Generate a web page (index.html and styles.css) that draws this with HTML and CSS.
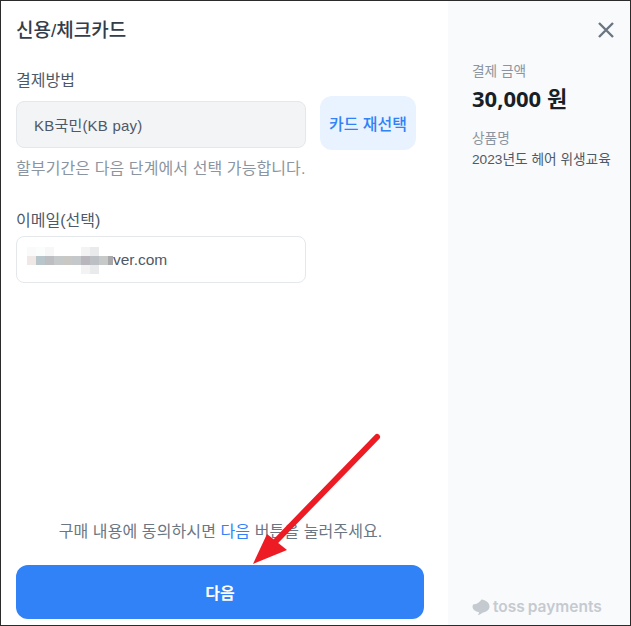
FILE: index.html
```html
<!DOCTYPE html>
<html lang="ko">
<head>
    <meta charset="UTF-8">
    <title>신용/체크카드</title>
    <link rel="stylesheet" href="styles.css">
</head>
<body>
    <div class="window">
        <div class="main">
            <h1 class="title">신용/체크카드</h1>

            <div class="field-label method-label">결제방법</div>
            <div class="method-row">
                <div class="input input-disabled">KB국민(KB pay)</div>
                <button class="reselect">카드 재선택</button>
            </div>
            <p class="hint">할부기간은 다음 단계에서 선택 가능합니다.</p>

            <div class="field-label email-label">이메일(선택)</div>
            <div class="input email-input">
                <svg class="mosaic" width="90" height="27" viewBox="0 0 90 27">
                    <rect x="0" y="0" width="9" height="9" fill="#fafafa"/>
                    <rect x="9" y="0" width="9" height="9" fill="#fbfcfc"/>
                    <rect x="18" y="0" width="9" height="9" fill="#f7f7f7"/>
                    <rect x="54" y="0" width="9" height="9" fill="#f3f3f3"/>
                    <rect x="63" y="0" width="9" height="9" fill="#e9eaec"/>
                    <rect x="0" y="9" width="9" height="9" fill="#efe8e6"/>
                    <rect x="9" y="9" width="9" height="9" fill="#b8c6cc"/>
                    <rect x="18" y="9" width="9" height="9" fill="#bcbec1"/>
                    <rect x="27" y="9" width="9" height="9" fill="#c6c9c9"/>
                    <rect x="36" y="9" width="9" height="9" fill="#c9c8c5"/>
                    <rect x="45" y="9" width="9" height="9" fill="#c4c8cb"/>
                    <rect x="54" y="9" width="9" height="9" fill="#b9b7bd"/>
                    <rect x="63" y="9" width="9" height="9" fill="#bcc0c5"/>
                    <rect x="72" y="9" width="9" height="9" fill="#c6c9c8"/>
                    <rect x="81" y="9" width="5" height="9" fill="#a9a9ab"/>
                    <rect x="54" y="18" width="9" height="9" fill="#f3f3f3"/>
                    <rect x="63" y="18" width="9" height="9" fill="#e9eaec"/>
                </svg>
                <span class="email-text">ver.com</span>
            </div>

            <div class="bottom">
                <p class="agree">구매 내용에 동의하시면 <span class="agree-link">다음</span> 버튼을 눌러주세요.</p>
                <button class="next">다음</button>
            </div>
        </div>

        <div class="side">
            <button class="close" aria-label="닫기">
                <svg width="18" height="18" viewBox="0 0 18 18">
                    <path d="M2 2L16 16M16 2L2 16" stroke="#6b7684" stroke-width="2.4" fill="none"/>
                </svg>
            </button>
            <div class="side-label">결제 금액</div>
            <div class="amount">30,000 원</div>
            <div class="side-label product-label">상품명</div>
            <div class="product">2023년도 헤어 위생교육</div>

            <div class="logo">
                <svg width="18" height="17" viewBox="0 0 18 17">
                    <path d="M9.5 0.5C13.8 1 17.5 3.6 17.5 7.6C17.5 11 14.6 13.2 11 13.4C9.6 14.6 8 15.6 5.8 16.2C6.6 15.2 7 14.2 7 13.2C3.2 12.6 0.5 10.6 0.5 7.6C0.5 6.6 0.9 5.8 1.6 5.2C4.4 5.4 7.2 4 9.5 0.5Z" fill="#c5cad1"/>
                </svg>
                <span>toss payments</span>
            </div>
        </div>

        <svg class="arrow" width="631" height="626" viewBox="0 0 631 626">
            <path d="M377 437L276 541" stroke="#ed1c24" stroke-width="6" stroke-linecap="round" fill="none"/>
            <path d="M253 564L267 534L287 550Z" fill="#ed1c24"/>
        </svg>
    </div>
</body>
</html>
```

FILE: styles.css
```css
* {
    box-sizing: border-box;
}

body {
    margin: 0;
    font-family: "Liberation Sans", "Noto Sans CJK KR", sans-serif;
    background-color: #fff;
}

.window {
    position: relative;
    display: flex;
    width: 631px;
    height: 626px;
    border: 1px solid #2b2b2b;
    overflow: hidden;
}

.main {
    display: flex;
    flex-direction: column;
    width: 447px;
    padding: 0 23px 6px 15px;
}

.title {
    margin: 18px 0 0;
    font-size: 19px;
    line-height: 24px;
    font-weight: 500;
    color: #333d4b;
}

.field-label {
    font-size: 16px;
    line-height: 22px;
    color: #4e5968;
}

.method-label {
    margin-top: 27px;
}

.method-row {
    display: flex;
    align-items: flex-start;
    gap: 14px;
    margin-top: 4px;
}

.input {
    display: flex;
    align-items: center;
    width: 290px;
    height: 47px;
    border-radius: 8px;
    font-size: 15px;
    color: #4e5968;
}

.input-disabled {
    margin-top: 5px;
    padding: 0 0 1px 17px;
    background-color: #f2f4f6;
    border: 1px solid #e5e8eb;
    letter-spacing: 0.2px;
}

.reselect {
    width: 96px;
    height: 54px;
    padding: 0;
    border: none;
    border-radius: 12px;
    background-color: #e8f3ff;
    color: #3182f6;
    font-family: inherit;
    font-size: 16px;
    font-weight: 500;
}

.hint {
    margin: 8px 0 0;
    font-size: 16px;
    line-height: 22px;
    letter-spacing: 0.1px;
    color: #8b95a1;
}

.email-label {
    margin-top: 30px;
}

.email-input {
    position: relative;
    margin-top: 4px;
    padding-left: 96px;
    background-color: #fff;
    border: 1px solid #e5e8eb;
    font-size: 15.5px;
}

.mosaic {
    position: absolute;
    left: 10px;
    top: 10px;
}

.bottom {
    margin-top: auto;
}

.agree {
    margin: 0 0 22px;
    text-align: center;
    font-size: 16px;
    line-height: 22px;
    letter-spacing: 0.1px;
    color: #6b7684;
}

.agree-link {
    color: #3182f6;
}

.next {
    display: block;
    width: 408px;
    height: 54px;
    padding: 0;
    border: none;
    border-radius: 12px;
    background-color: #3182f6;
    color: #fff;
    font-family: inherit;
    font-size: 16px;
    font-weight: 700;
}

.side {
    position: relative;
    display: flex;
    flex-direction: column;
    flex: 1;
    padding: 62px 16px 0 24px;
    background-color: #f9fafb;
}

.close {
    position: absolute;
    top: 20px;
    right: 15px;
    display: flex;
    padding: 0;
    border: none;
    background: none;
}

.side-label {
    font-size: 13.7px;
    line-height: 18px;
    color: #8b95a1;
}

.amount {
    margin-top: 3px;
    font-family: "Open Sans", "Noto Sans CJK KR", sans-serif;
    font-size: 22px;
    line-height: 28px;
    font-weight: 700;
    color: #191f28;
}

.product-label {
    margin-top: 18px;
}

.product {
    margin-top: 2px;
    font-size: 13.7px;
    line-height: 20px;
    color: #4e5968;
    white-space: nowrap;
}

.logo {
    display: flex;
    align-items: center;
    gap: 3px;
    margin-top: auto;
    margin-bottom: 7px;
    font-family: Inter, sans-serif;
    font-size: 15.5px;
    line-height: 22px;
    font-weight: 600;
    word-spacing: -1px;
    color: #c5cad1;
    white-space: nowrap;
}

.arrow {
    position: absolute;
    left: -1px;
    top: -1px;
    pointer-events: none;
}
```
